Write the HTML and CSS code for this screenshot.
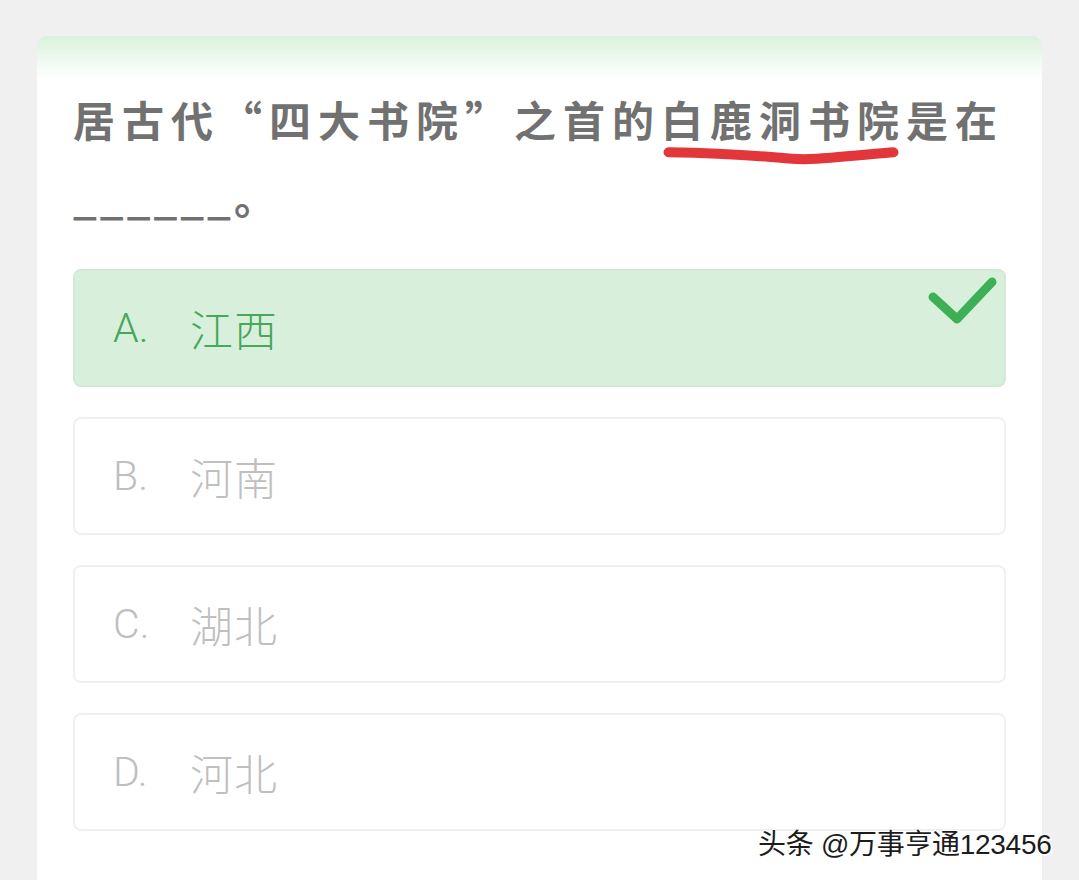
FILE: index.html
```html
<!DOCTYPE html>
<html lang="zh-CN">
<head>
<meta charset="utf-8">
<title>答题</title>
<link rel="stylesheet" href="styles.css">
</head>
<body>
<div class="page">
  <div class="card">
    <p class="question">居古代“四大书院”之首的<span class="mark">白鹿洞书院<svg class="scribble" viewBox="0 0 240 24" preserveAspectRatio="none"><path d="M7 8 C60 9 100 12 130 15 C150 17 175 13 231 8" fill="none" stroke="#e2363a" stroke-width="11" stroke-linecap="round"/></svg></span>是在<span class="blank">______</span>。</p>
    <div class="options">
      <div class="option correct">
        <span class="letter">A.</span><span class="label">江西</span>
        <svg class="check" viewBox="0 0 76 50"><path d="M8 22 L32 44 L67 7" fill="none" stroke="#3daf55" stroke-width="9" stroke-linecap="round" stroke-linejoin="round"/></svg>
      </div>
      <div class="option"><span class="letter">B.</span><span class="label">河南</span></div>
      <div class="option"><span class="letter">C.</span><span class="label">湖北</span></div>
      <div class="option"><span class="letter">D.</span><span class="label">河北</span></div>
    </div>
  </div>
  <div class="watermark">头条 @万事亨通123456</div>
</div>
</body>
</html>
```
FILE: styles.css
```css
html, body {
  margin: 0;
  padding: 0;
  background: #f0f0f0;
}
.page {
  position: relative;
  width: 1079px;
  height: 880px;
  overflow: hidden;
  padding: 36px 0 0 37px;
  box-sizing: border-box;
}
.card {
  width: 1005px;
  min-height: 900px;
  box-sizing: border-box;
  border-radius: 10px;
  background: linear-gradient(to bottom, #d9f1dc 0px, #f3fbf4 28px, #ffffff 44px, #ffffff 100%);
  padding: 44px 36px 0 36px;
}
.question {
  margin: 0;
  font-family: "Noto Sans CJK SC", "Noto Sans", sans-serif;
  font-weight: 700;
  font-size: 42px;
  line-height: 77px;
  letter-spacing: 7px;
  color: #717171;
}
.mark {
  position: relative;
}
.scribble {
  position: absolute;
  left: 1px;
  top: 57px;
  width: 240px;
  height: 22px;
}
.blank {
  letter-spacing: 3px;
}
.options {
  display: flex;
  flex-direction: column;
  gap: 30px;
  margin-top: 35px;
}
.option {
  position: relative;
  height: 118px;
  box-sizing: border-box;
  border: 2px solid #f0f0f0;
  border-radius: 8px;
  background: #ffffff;
  display: flex;
  align-items: center;
  padding-left: 38px;
  font-family: "Noto Sans CJK SC", "Noto Sans", sans-serif;
  font-weight: 300;
  font-size: 43px;
  color: #bfbfbf;
}
.option.correct {
  background: #d8f0db;
  border-color: #d2e9d5;
  color: #45a85a;
}
.letter {
  width: 77px;
  font-family: "Roboto", "Noto Sans", sans-serif;
  font-weight: 300;
  font-size: 41px;
}
.label {
  letter-spacing: 1px;
}
.check {
  position: absolute;
  right: 3px;
  top: 4px;
  width: 76px;
  height: 50px;
}
.watermark {
  position: absolute;
  left: 758px;
  top: 822px;
  font-family: "Liberation Sans", "Noto Sans CJK SC", sans-serif;
  font-size: 28px;
  color: #1c1c1c;
  letter-spacing: -0.3px;
  text-shadow: 1px 1px 0 #ffffff, -1px 0 0 #ffffff, 0 -1px 0 #ffffff, 2px 2px 1px rgba(255,255,255,0.9);
}
```
